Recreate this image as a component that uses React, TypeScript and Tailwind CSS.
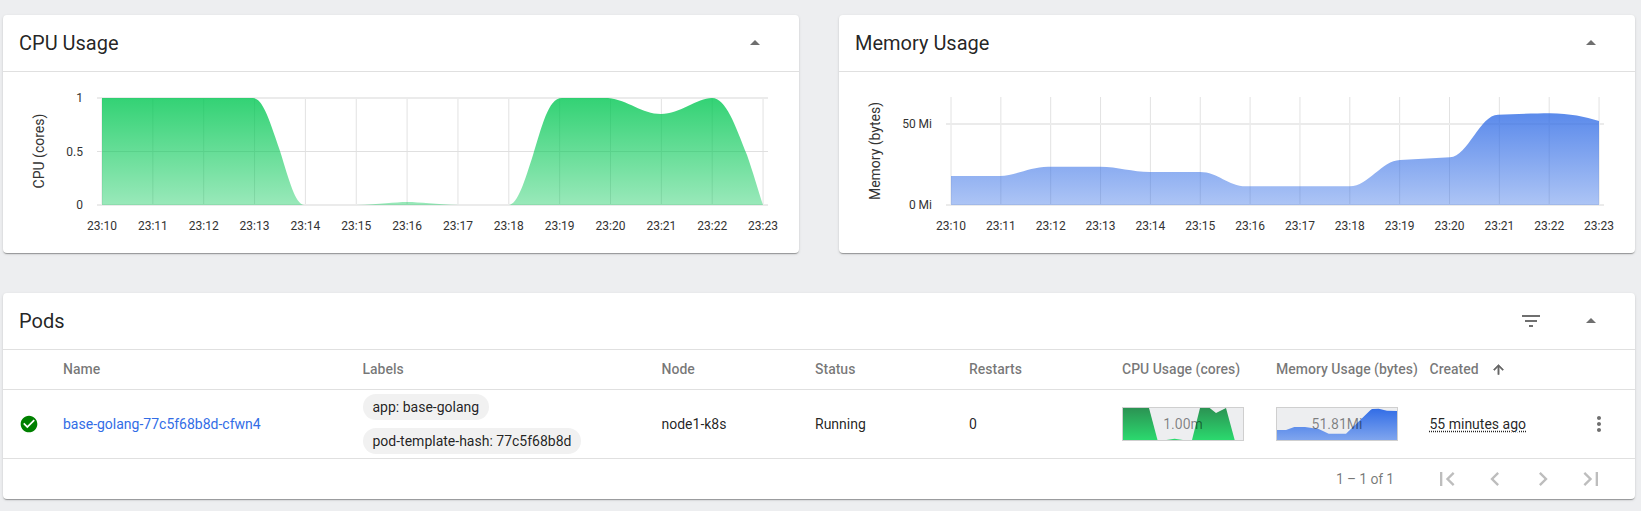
const minutes = ['23:10','23:11','23:12','23:13','23:14','23:15','23:16','23:17','23:18','23:19','23:20','23:21','23:22','23:23'];

const cpuA = 'M102,98 L253,98 C262,99 267,112 280,151 C290,183 295,203 304,205 L102,205 Z';
const cpuBump = 'M356,205 C380,204.5 395,202 407,202 C420,202 435,204.5 460,205 Z';
const cpuB = 'M509,205 C518,204 525,180 533,155 C542,127 548,98 562,98 L608,98 C628,100 642,114 661,114 C680,114 697,98 712,98 C726,98 735,125 747,155 C753,172 758,190 763,205 Z';
const memArea = 'M951,176 L1000,176 C1015,176 1030,166.7 1048,166.7 L1100,166.7 C1118,166.7 1132,172 1150,172 L1200,172 C1218,172 1228,186.3 1246,186.3 L1350,186.3 C1368,186.3 1382,160.5 1400,160 L1450,157.3 C1468,156 1480,115 1498,114.7 C1515,114 1535,113.3 1550,113.3 C1570,113.3 1585,117 1599,121 L1599,205 L951,205 Z';

function Arrow() {
  return (
    <svg viewBox="0 0 24 24" className="w-6 h-6 fill-[#6f6f6f]"><path d="M7 14l5-5 5 5z" /></svg>
  );
}

function CardHeader({ title, filter }: { title: string; filter?: boolean }) {
  return (
    <div className="flex items-center justify-between h-[57px] pl-4 pr-[32px] border-b border-[#e0e0e0]">
      <div className="text-[20px] text-[#000000de]">{title}</div>
      <div className="flex items-center gap-[36px]">
        {filter && (
          <svg viewBox="0 0 24 24" className="w-6 h-6 fill-[#6f6f6f]"><path d="M10 18h4v-2h-4v2zM3 6v2h18V6H3zm3 7h12v-2H6v2z" /></svg>
        )}
        <Arrow />
      </div>
    </div>
  );
}

function Axis({ x0, step, xEnd, xStart, thick, thin }: { x0: number; step: number; xEnd: number; xStart: number; thick: number[]; thin: number[] }) {
  return (
    <g>
      {minutes.map((m, i) => (
        <line key={m} x1={x0 + step * i} x2={x0 + step * i} y1={97} y2={205} stroke="#e2e2e2" strokeWidth="1" />
      ))}
      {thin.map((y) => (
        <line key={y} x1={xStart} x2={xEnd} y1={y} y2={y} stroke="#e0e0e0" strokeWidth="1" />
      ))}
      {thick.map((y) => (
        <line key={y} x1={xStart} x2={xEnd} y1={y} y2={y} stroke="#ebebeb" strokeWidth="2" />
      ))}
      {minutes.map((m, i) => (
        <text key={m} x={x0 + step * i} y={230} textAnchor="middle" fontSize="12" fill="#333">{m}</text>
      ))}
    </g>
  );
}

function CpuChart() {
  return (
    <svg viewBox="3 72 796 181" className="block w-[796px] h-[181px] font-[Roboto,sans-serif]">
      <defs>
        <linearGradient id="g1" x1="0" y1="98" x2="0" y2="205" gradientUnits="userSpaceOnUse">
          <stop offset="0" stopColor="#00c752" stopOpacity="0.8" />
          <stop offset="1" stopColor="#00c752" stopOpacity="0.4" />
        </linearGradient>
      </defs>
      <Axis x0={102} step={50.85} xStart={97} xEnd={768} thick={[98, 205]} thin={[151.5]} />
      <path d={cpuA} fill="url(#g1)" />
      <path d={cpuBump} fill="url(#g1)" />
      <path d={cpuB} fill="url(#g1)" />
      <text x="83" y="102" textAnchor="end" fontSize="12" fill="#333">1</text>
      <text x="83" y="155.5" textAnchor="end" fontSize="12" fill="#333">0.5</text>
      <text x="83" y="209" textAnchor="end" fontSize="12" fill="#333">0</text>
      <text transform="translate(44,151) rotate(-90)" textAnchor="middle" fontSize="14" fill="#333">CPU (cores)</text>
    </svg>
  );
}

function MemChart() {
  return (
    <svg viewBox="839 72 796 181" className="block w-[796px] h-[181px] font-[Roboto,sans-serif]">
      <defs>
        <linearGradient id="g2" x1="0" y1="113" x2="0" y2="205" gradientUnits="userSpaceOnUse">
          <stop offset="0" stopColor="#326de6" stopOpacity="0.8" />
          <stop offset="1" stopColor="#326de6" stopOpacity="0.4" />
        </linearGradient>
      </defs>
      <Axis x0={951} step={49.85} xStart={946} xEnd={1604} thick={[124, 205]} thin={[]} />
      <path d={memArea} fill="url(#g2)" />
      <text x="932" y="128" textAnchor="end" fontSize="12" fill="#333">50 Mi</text>
      <text x="932" y="209" textAnchor="end" fontSize="12" fill="#333">0 Mi</text>
      <text transform="translate(880,151) rotate(-90)" textAnchor="middle" fontSize="14" fill="#333">Memory (bytes)</text>
    </svg>
  );
}

function Spark({ label, children }: { label: string; children: React.ReactNode }) {
  return (
    <div className="relative w-[122px] h-[34px] bg-[#edeef0] border border-[#cfcfcf]">
      <svg viewBox="0 0 120 32" preserveAspectRatio="none" className="block w-[120px] h-[32px]">{children}</svg>
      <div className="absolute inset-0 flex items-center justify-center text-[14px] text-[#00000078]">{label}</div>
    </div>
  );
}

const headers = ['', 'Name', 'Labels', 'Node', 'Status', 'Restarts', 'CPU Usage (cores)', 'Memory Usage (bytes)'];
const rowGrid = 'grid grid-cols-[60px_299.5px_299px_153.5px_154px_153px_154px_153.5px_1fr]';

const pageIcons = [
  'M18.41 16.59L13.82 12l4.59-4.59L17 6l-6 6 6 6zM6 6h2v12H6z',
  'M15.41 7.41L14 6l-6 6 6 6 1.41-1.41L10.83 12z',
  'M10 6L8.59 7.41 13.17 12l-4.58 4.59L10 18l6-6z',
  'M5.59 7.41L10.18 12l-4.59 4.59L7 18l6-6-6-6zM16 6h2v12h-2z',
];

const cardClass = 'bg-white rounded-[4px] shadow-[0_2px_1px_-1px_rgba(0,0,0,0.2),0_1px_1px_0_rgba(0,0,0,0.14),0_1px_3px_0_rgba(0,0,0,0.12)]';

export default function App() {
  return (
    <div className="min-h-[511px] bg-[#edeef0] pt-[15px] pl-[3px] pr-[6px] font-[Roboto,sans-serif]">
      <div className="grid grid-cols-2 gap-x-[40px]">
        <div className={cardClass}>
          <CardHeader title="CPU Usage" />
          <CpuChart />
        </div>
        <div className={cardClass}>
          <CardHeader title="Memory Usage" />
          <MemChart />
        </div>
      </div>

      <div className={cardClass + ' mt-[40px]'}>
        <CardHeader title="Pods" filter />
        <div className={rowGrid + ' h-[40px] items-center border-b border-[#e0e0e0] text-[14px] font-medium text-[#0000008a]'}>
          {headers.map((h, i) => (
            <div key={i} className="whitespace-nowrap">{h}</div>
          ))}
          <div className="flex items-center">
            <span>Created</span>
            <svg viewBox="0 0 24 24" className="w-[15px] h-[15px] ml-[12px] fill-[#666666] stroke-[#666666] stroke-[1]"><path d="M4 12l1.41 1.41L11 7.83V20h2V7.83l5.58 5.59L20 12l-8-8-8 8z" /></svg>
          </div>
        </div>
        <div className={rowGrid + ' h-[69px] items-center border-b border-[#e0e0e0] text-[14px] text-[#000000de]'}>
          <div className="pl-4">
            <svg viewBox="0 0 24 24" className="w-5 h-5 fill-[#008000]"><path d="M12 2C6.48 2 2 6.48 2 12s4.48 10 10 10 10-4.48 10-10S17.52 2 12 2zm-2 15l-5-5 1.41-1.41L10 14.17l7.59-7.59L19 8l-9 9z" /></svg>
          </div>
          <div className="text-[#326de6]">base-golang-77c5f68b8d-cfwn4</div>
          <div className="flex flex-col items-start gap-2">
            <span className="h-[26px] leading-[26px] px-[10px] rounded-[13px] bg-[#f1f1f1]">app: base-golang</span>
            <span className="h-[26px] leading-[26px] px-[10px] rounded-[13px] bg-[#f1f1f1]">pod-template-hash: 77c5f68b8d</span>
          </div>
          <div>node1-k8s</div>
          <div>Running</div>
          <div>0</div>
          <div>
            <Spark label="1.00m">
              <defs>
                <linearGradient id="s1" x1="0" y1="0" x2="0" y2="1">
                  <stop offset="0" stopColor="#2b9353" />
                  <stop offset="1" stopColor="#2bd96e" />
                </linearGradient>
              </defs>
              <polygon points="0,0 26,0 34.5,32 0,32" fill="url(#s1)" />
              <polygon points="43.3,32 51.6,30.7 60,32" fill="#2bd96e" />
              <polygon points="69,32 77,0 86.7,0 93,5 103,0 111.7,32" fill="url(#s1)" />
            </Spark>
          </div>
          <div>
            <Spark label="51.81Mi">
              <defs>
                <linearGradient id="s2" x1="0" y1="0" x2="0" y2="1">
                  <stop offset="0" stopColor="#326de6" />
                  <stop offset="1" stopColor="#7fa5ee" />
                </linearGradient>
              </defs>
              <polygon points="0,22 9,22 17.3,19 28,19 41.7,21 51.7,25.7 69,25.7 93.3,2.3 95,1 101.7,0.7 110,2.7 120,3 120,32 0,32" fill="url(#s2)" />
            </Spark>
          </div>
          <div className="flex items-center justify-between pr-[24px]">
            <span className="underline decoration-dotted decoration-[#000000de] underline-offset-[2px]">55 minutes ago</span>
            <svg viewBox="0 0 24 24" className="w-6 h-6 fill-[#6f6f6f]"><path d="M12 8c1.1 0 2-.9 2-2s-.9-2-2-2-2 .9-2 2 .9 2 2 2zm0 2c-1.1 0-2 .9-2 2s.9 2 2 2 2-.9 2-2-.9-2-2-2zm0 6c-1.1 0-2 .9-2 2s.9 2 2 2 2-.9 2-2-.9-2-2-2z" /></svg>
          </div>
        </div>
        <div className="flex items-center justify-end h-[40px] pr-[20px]">
          <span className="text-[14px] tracking-[-0.15px] text-[#0000008a] mr-[29px]">1 – 1 of 1</span>
          {pageIcons.map((d) => (
            <div key={d} className="w-[48px] flex justify-center">
              <svg viewBox="0 0 24 24" className="w-7 h-7 fill-[#bdbdbd]"><path d={d} /></svg>
            </div>
          ))}
        </div>
      </div>
    </div>
  );
}
